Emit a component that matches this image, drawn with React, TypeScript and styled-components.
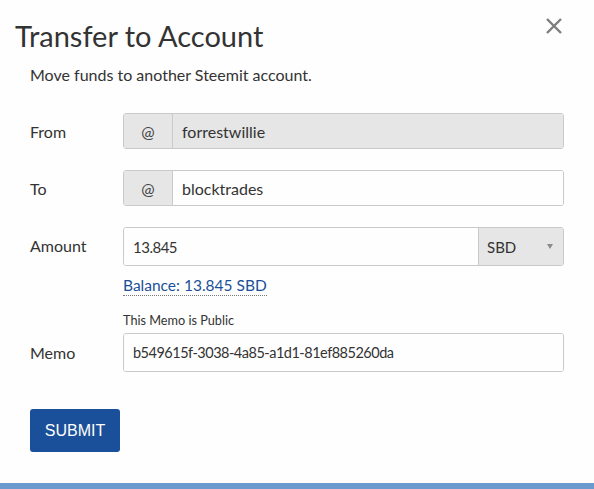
import React from 'react';
import styled, { createGlobalStyle } from 'styled-components';

const GlobalStyle = createGlobalStyle`
  html, body {
    margin: 0;
    padding: 0;
    background: #fefefe;
  }
  body {
    font-family: 'Lato', 'Liberation Sans', sans-serif;
    color: #333;
  }
`;

const Modal = styled.div`
  position: relative;
  width: 594px;
  height: 489px;
  box-sizing: border-box;
  padding: 17px 30px 0 30px;
  background: #fefefe;
  border-bottom: 6px solid #6b9ace;
`;

const Close = styled.button`
  position: absolute;
  top: 13px;
  right: 27px;
  width: 26px;
  height: 26px;
  padding: 0;
  border: 0;
  background: transparent;
  display: flex;
  align-items: center;
  justify-content: center;
  cursor: pointer;
`;

const Title = styled.h1`
  margin: 0 0 0 -15px;
  font-size: 29px;
  font-weight: 400;
  line-height: 38px;
  color: #333;
`;

const Subtitle = styled.p`
  margin: 10px 0 0;
  font-size: 16px;
  line-height: 20px;
  color: #333;
`;

const Form = styled.form`
  margin-top: 28px;
  display: flex;
  flex-direction: column;
`;

const Row = styled.div<{ $top?: number }>`
  display: grid;
  grid-template-columns: 93px 1fr;
  align-items: center;
  margin-top: ${p => p.$top ?? 0}px;
`;

const Label = styled.label<{ $top?: boolean }>`
  font-size: 16px;
  color: #333;
  align-self: ${p => (p.$top ? 'start' : 'center')};
  margin-top: ${p => (p.$top ? '9px' : '0')};
`;

const Field = styled.div`
  grid-column: 2;
`;

const Group = styled.div<{ $height: number }>`
  display: flex;
  height: ${p => p.$height}px;
  border: 1px solid #cacaca;
  border-radius: 3px;
  box-sizing: border-box;
  overflow: hidden;
`;

const Addon = styled.span`
  flex: 0 0 48px;
  display: flex;
  align-items: center;
  justify-content: center;
  background: #e6e6e6;
  border-right: 1px solid #cacaca;
  font-size: 16px;
  color: #444;
`;

// Lato digits run wider than the reference face, so number-heavy fields are tightened
const Input = styled.input<{ $disabled?: boolean; $size?: number; $tracking?: number }>`
  flex: 1;
  min-width: 0;
  border: 0;
  outline: 0;
  padding: 0 9px;
  font-family: inherit;
  font-size: ${p => p.$size ?? 16}px;
  letter-spacing: ${p => p.$tracking ?? 0}px;
  color: #333;
  background: ${p => (p.$disabled ? '#e6e6e6' : '#fefefe')};
`;

const Select = styled.div`
  flex: 0 0 85px;
  display: flex;
  align-items: center;
  justify-content: space-between;
  padding: 0 10px 0 8px;
  box-sizing: border-box;
  background: #e6e6e6;
  border-left: 1px solid #cacaca;
  font-size: 15px;
  color: #333;
`;

const Caret = styled.span`
  width: 0;
  height: 0;
  border-left: 3.5px solid transparent;
  border-right: 3.5px solid transparent;
  border-top: 5px solid #8a8a8a;
`;

const Balance = styled.a`
  display: inline-block;
  margin-top: 9px;
  font-size: 15.5px;
  line-height: 20px;
  color: #1a5099;
  text-decoration: none;
  border-bottom: 1px dotted #777;
`;

const Hint = styled.div`
  margin-top: 16px;
  font-size: 12.7px;
  line-height: 16px;
  color: #333;
`;

const Submit = styled.button`
  margin-top: 37px;
  align-self: flex-start;
  width: 90px;
  height: 43px;
  border: 0;
  border-radius: 3px;
  background: #1a5099;
  color: #fff;
  font-family: 'Liberation Sans', Arial, sans-serif;
  font-size: 16px;
  cursor: pointer;
`;

const CloseIcon = () => (
  <svg width="18" height="18" viewBox="0 0 18 18">
    <path d="M2 2 L16 16 M16 2 L2 16" stroke="#7d7d7d" strokeWidth="2.4" />
  </svg>
);

export default function App() {
  return (
    <>
      <GlobalStyle />
      <Modal>
        <Close aria-label="Close">
          <CloseIcon />
        </Close>
        <Title>Transfer to Account</Title>
        <Subtitle>Move funds to another Steemit account.</Subtitle>
        <Form onSubmit={e => e.preventDefault()}>
          <Row>
            <Label>From</Label>
            <Group $height={36}>
              <Addon>@</Addon>
              <Input $disabled readOnly value="forrestwillie" />
            </Group>
          </Row>
          <Row $top={21}>
            <Label>To</Label>
            <Group $height={36}>
              <Addon>@</Addon>
              <Input readOnly value="blocktrades" />
            </Group>
          </Row>
          <Row $top={21}>
            <Label $top>Amount</Label>
            <div>
              <Group $height={39}>
                <Input $size={15} $tracking={-0.5} readOnly value="13.845" />
                <Select>
                  SBD
                  <Caret />
                </Select>
              </Group>
              <Balance href="#">Balance: 13.845 SBD</Balance>
            </div>
          </Row>
          <Row>
            <Field>
              <Hint>This Memo is Public</Hint>
            </Field>
          </Row>
          <Row $top={5}>
            <Label>Memo</Label>
            <Group $height={39}>
              <Input
                $size={14.5}
                $tracking={-0.5}
                readOnly
                value="b549615f-3038-4a85-a1d1-81ef885260da"
              />
            </Group>
          </Row>
          <Submit type="submit">SUBMIT</Submit>
        </Form>
      </Modal>
    </>
  );
}
